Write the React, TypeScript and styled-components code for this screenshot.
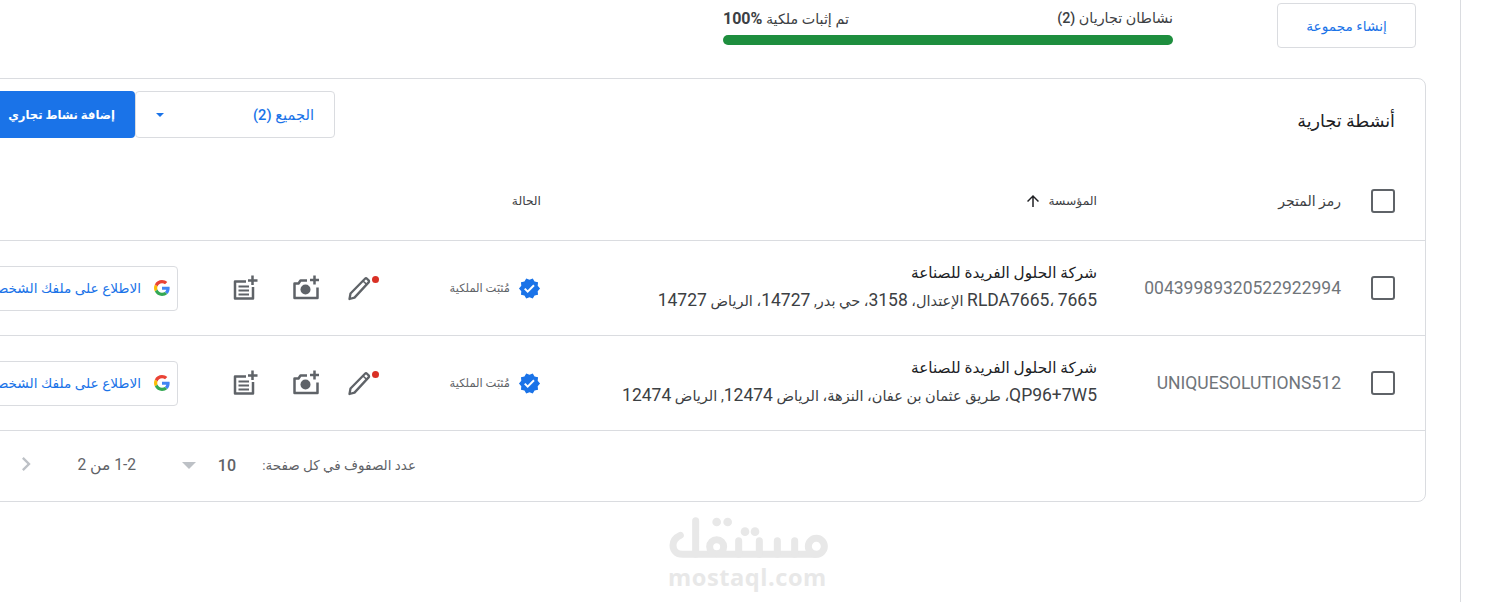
import React from "react";
import styled, { createGlobalStyle } from "styled-components";
import { MdVerified, MdArrowUpward, MdChevronRight } from "react-icons/md";

const Global = createGlobalStyle`
  html, body { margin: 0; padding: 0; height: 100%; overflow: hidden; background: #fff; }
  #root { width: 1496px; height: 602px; overflow: hidden; }
`;

const Page = styled.div`
  direction: rtl;
  position: relative;
  display: flex;
  width: 1496px;
  height: 602px;
  overflow: hidden;
  font-family: Roboto, "Liberation Sans", "DejaVu Sans", sans-serif;
  color: #3c4043;
  background: #fff;
`;
const Rail = styled.aside`
  flex: 0 0 36px;
  box-sizing: border-box;
  border-left: 1px solid #dadce0;
`;
const Main = styled.main`
  flex: 0 0 1600px;
  box-sizing: border-box;
  padding: 3px 34px 0 0;
`;
const TopBar = styled.div`
  display: flex;
  align-items: flex-start;
  gap: 104px;
  padding-right: 10px;
  margin-bottom: 30px;
`;
const GroupButton = styled.button`
  width: 139px;
  height: 45px;
  background: #fff;
  border: 1px solid #dadce0;
  border-radius: 4px;
  color: #1a73e8;
  font: inherit;
  font-size: 13.7px;
  font-weight: 500;
`;
const Progress = styled.div`
  width: 450px;
  padding-top: 4px;
`;
const ProgressLabels = styled.div`
  display: flex;
  justify-content: space-between;
  align-items: center;
  height: 22px;
  margin-bottom: 6px;
  font-size: 14.3px;
  font-weight: 500;
  color: #3c4043;
`;
const Percent = styled.span`
  direction: ltr;
  unicode-bidi: isolate;
  font-size: 16px;
  font-weight: 700;
`;
const Bar = styled.div`
  height: 10px;
  border-radius: 5px;
  background: #1e8e3e;
`;
const Card = styled.section`
  box-sizing: border-box;
  width: 1600px;
  height: 424px;
  border: 1px solid #dadce0;
  border-radius: 8px;
`;
const CardHeader = styled.header`
  display: flex;
  align-items: flex-start;
  height: 83px;
  box-sizing: border-box;
  padding: 12px 30px 0 0;
`;
const Title = styled.h2`
  flex: 0 0 1060px;
  margin: 0;
  padding-top: 15px;
  font-size: 17.5px;
  line-height: 30px;
  font-weight: 400;
  color: #202124;
`;
const Select = styled.div`
  box-sizing: border-box;
  flex: 0 0 200px;
  height: 47px;
  display: flex;
  align-items: center;
  justify-content: space-between;
  padding: 0 20px;
  border: 1px solid #dadce0;
  border-radius: 4px;
  color: #1a73e8;
  font-size: 14.7px;
  font-weight: 500;
`;
const Caret = styled.span<{ $c: string; $w: number }>`
  width: 0;
  height: 0;
  flex: none;
  border-left: ${(p) => p.$w}px solid transparent;
  border-right: ${(p) => p.$w}px solid transparent;
  border-top: ${(p) => p.$w}px solid ${(p) => p.$c};
`;
const AddButton = styled.button`
  box-sizing: border-box;
  flex: 0 0 170px;
  height: 47px;
  padding: 0 20px;
  text-align: right;
  background: #1a73e8;
  border: 0;
  border-radius: 4px;
  color: #fff;
  font: inherit;
  font-size: 11.6px;
  font-weight: 700;
  white-space: nowrap;
`;
const Row = styled.div<{ $h: number }>`
  display: grid;
  grid-template-columns: 84px 244px 556px 165px 198px 1fr;
  align-items: center;
  height: ${(p) => p.$h}px;
  box-sizing: content-box;
  border-bottom: 1px solid #dadce0;
`;
const CheckCell = styled.div`
  display: flex;
  padding-right: 30px;
`;
const CheckBox = styled.span`
  box-sizing: border-box;
  width: 24px;
  height: 24px;
  border: 2px solid #5f6368;
  border-radius: 3px;
`;
const HeadCell = styled.div<{ $large?: boolean }>`
  display: flex;
  align-items: center;
  gap: 7px;
  font-size: ${(p) => (p.$large ? "14px" : "12.3px")};
  font-weight: ${(p) => (p.$large ? 400 : 500)};
  color: #3c4043;
`;
const StoreCode = styled.div`
  font-size: 17.5px;
  color: #70757a;
  direction: ltr;
  text-align: right;
`;
const Business = styled.div`
  display: flex;
  flex-direction: column;
  gap: 5px;
  margin-top: -2px;
`;
const BusinessName = styled.div`
  font-size: 15.3px;
  line-height: 22px;
  color: #202124;
`;
const BusinessAddress = styled.div`
  font-size: 14.5px;
  line-height: 22px;
  color: #3c4043;
  white-space: nowrap;
`;
const LatinRun = styled.span`
  font-size: 17.5px;
`;
const Status = styled.div`
  display: flex;
  align-items: center;
  gap: 8px;
  font-size: 11.5px;
  color: #5f6368;
  svg { color: #1a73e8; flex: none; }
`;
const Actions = styled.div`
  display: flex;
  align-items: center;
  gap: 28px;
  padding-right: 4px;
`;
const IconSlot = styled.span<{ $w: number }>`
  position: relative;
  display: flex;
  flex: none;
  width: ${(p) => p.$w}px;
  height: 28px;
  align-items: center;
  justify-content: flex-start;
`;
const RedDot = styled.span`
  position: absolute;
  top: 2px;
  right: -7px;
  width: 7px;
  height: 7px;
  border-radius: 50%;
  background: #d93025;
`;
const ProfileButton = styled.button`
  box-sizing: border-box;
  width: 260px;
  height: 45px;
  display: flex;
  align-items: center;
  gap: 13px;
  padding: 0 7px;
  background: #fff;
  border: 1px solid #dadce0;
  border-radius: 4px;
  color: #1a73e8;
  font: inherit;
  font-size: 13.7px;
  font-weight: 500;
  white-space: nowrap;
`;
const Footer = styled.footer`
  display: flex;
  align-items: center;
  height: 68px;
  padding-right: 1009px;
  color: #5f6368;
  white-space: nowrap;
`;
const PerPage = styled.span`
  font-size: 13.5px;
  width: 180px;
`;
const PageSize = styled.span`
  font-size: 16px;
  font-weight: 500;
  width: 40px;
`;
const Range = styled.span`
  margin-right: 46px;
  margin-left: 36px;
  width: 60px;
  font-size: 15.6px;
`;
const Chevron = styled.span`
  display: flex;
  color: #bdc1c6;
  margin-top: -2px;
`;
const Watermark = styled.div`
  position: absolute;
  left: 640px;
  top: 500px;
  width: 220px;
  height: 102px;
  direction: ltr;
  pointer-events: none;
`;
const WatermarkLogo = styled.svg`
  display: block;
  position: absolute;
  left: 0;
  top: 0;
`;
const WatermarkText = styled.div`
  position: absolute;
  left: 28px;
  top: 63px;
  font-family: "Open Sans", Roboto, sans-serif;
  font-size: 23.6px;
  line-height: 28px;
  font-weight: 700;
  letter-spacing: 0.55px;
  color: #e8e8e8;
`;

const Pencil = () => (
  <svg width="24" height="28" viewBox="0 0 24 28" fill="none" stroke="#5f6368" strokeWidth="2.3" strokeLinejoin="round">
    <path d="M1.5 25l1-5.5L17 4.8c.6-.6 1.4-.6 2 0l1.6 1.6c.6.6.6 1.4 0 2L6.5 23.6z" />
    <path d="M15 7l4 3.6" strokeWidth="1.6" />
  </svg>
);
const CameraPlus = () => (
  <svg width="28" height="28" viewBox="0 0 28 28" fill="none" stroke="#5f6368" strokeWidth="2.5" strokeLinejoin="round">
    <path d="M15 6.5H8.5L6.5 9.5H2.5V24H25.5V13.5" />
    <path d="M22.5 1.5V10.5M18 6H27" />
    <circle cx="13.5" cy="15.5" r="5" fill="#5f6368" stroke="none" />
  </svg>
);
const NotePlus = () => (
  <svg width="28" height="28" viewBox="0 0 28 28" fill="none" stroke="#5f6368" strokeWidth="2.5" strokeLinejoin="round">
    <path d="M14 7.5H3V24.5H21V13" />
    <path d="M6.5 12.5H17M6.5 16.5H17M6.5 20.5H17" strokeWidth="2" />
    <path d="M20.5 1.5V11M16 6.5H25.5" />
  </svg>
);
const GoogleG = () => (
  <svg width="16" height="16" viewBox="0 0 48 48" style={{ flex: "none" }}>
    <path fill="#EA4335" d="M24 9.5c3.5 0 6.7 1.2 9.1 3.6l6.8-6.8C35.9 2.4 30.5 0 24 0 14.6 0 6.5 5.4 2.6 13.2l7.9 6.1C12.4 13.7 17.7 9.5 24 9.5z" />
    <path fill="#4285F4" d="M46.9 24.5c0-1.6-.1-3.1-.4-4.5H24v9h12.9c-.6 3-2.2 5.5-4.7 7.2l7.7 6c4.5-4.2 7-10.3 7-17.7z" />
    <path fill="#FBBC05" d="M10.5 28.7c-.5-1.4-.8-3-.8-4.7s.3-3.2.8-4.7l-7.9-6.1C.9 16.5 0 20.1 0 24s.9 7.5 2.6 10.8l7.9-6.1z" />
    <path fill="#34A853" d="M24 48c6.5 0 11.9-2.1 15.9-5.8l-7.7-6c-2.1 1.4-4.9 2.3-8.2 2.3-6.3 0-11.6-4.2-13.5-9.9l-7.9 6.1C6.5 42.6 14.6 48 24 48z" />
  </svg>
);

const rows = [
  { code: "00439989320522922994", addr: "7665 ،RLDA7665 الإعتدال، 3158، حي بدر, 14727، الرياض 14727" },
  { code: "UNIQUESOLUTIONS512", addr: "QP96+7W5، طريق عثمان بن عفان، النزهة، الرياض 12474, الرياض 12474" },
];

const Address = ({ text }: { text: string }) => (
  <BusinessAddress>
    {text.split(/([A-Z0-9+]+)/).map((part, i) =>
      i % 2 ? <LatinRun key={i}>{part}</LatinRun> : part
    )}
  </BusinessAddress>
);

export default function App() {
  return (
    <Page>
      <Global />
      <Rail />
      <Main>
        <TopBar>
          <GroupButton>إنشاء مجموعة</GroupButton>
          <Progress>
            <ProgressLabels>
              <span>نشاطان تجاريان (2)</span>
              <span>تم إثبات ملكية <Percent>100%</Percent></span>
            </ProgressLabels>
            <Bar />
          </Progress>
        </TopBar>
        <Card>
          <CardHeader>
            <Title>أنشطة تجارية</Title>
            <Select>
              <span>الجميع (2)</span>
              <Caret $c="#1a73e8" $w={4} />
            </Select>
            <AddButton>إضافة نشاط تجاري</AddButton>
          </CardHeader>
          <Row $h={78}>
            <CheckCell><CheckBox /></CheckCell>
            <HeadCell $large>رمز المتجر</HeadCell>
            <HeadCell>المؤسسة <MdArrowUpward size={18} color="#202124" /></HeadCell>
            <HeadCell>الحالة</HeadCell>
          </Row>
          {rows.map((r) => (
            <Row $h={94} key={r.code}>
              <CheckCell><CheckBox /></CheckCell>
              <StoreCode>{r.code}</StoreCode>
              <Business>
                <BusinessName>شركة الحلول الفريدة للصناعة</BusinessName>
                <Address text={r.addr} />
              </Business>
              <Status>
                <MdVerified size={23} />
                <span>مُثبَت الملكية</span>
              </Status>
              <Actions>
                <IconSlot $w={24}><Pencil /><RedDot /></IconSlot>
                <IconSlot $w={32}><CameraPlus /></IconSlot>
                <IconSlot $w={28}><NotePlus /></IconSlot>
              </Actions>
              <ProfileButton><GoogleG />الاطلاع على ملفك الشخصي</ProfileButton>
            </Row>
          ))}
          <Footer>
            <PerPage>عدد الصفوف في كل صفحة:</PerPage>
            <PageSize>10</PageSize>
            <Caret $c="#bdc1c6" $w={7} />
            <Range>1-2 من 2</Range>
            <Chevron><MdChevronRight size={28} /></Chevron>
          </Footer>
        </Card>
      </Main>
      <Watermark>
        <WatermarkLogo width="220" height="102" viewBox="0 0 660 306" fill="none" stroke="#e8e8e8" strokeWidth="21" strokeLinecap="round" strokeLinejoin="round">
          <path d="M167 62 V163 H128 C108 163 99 150 99 136 C99 122 108 112 121 106" />
          <path d="M167 163 H526" />
          <circle cx="230" cy="140" r="21" />
          <circle cx="529" cy="139" r="24" />
          <path d="M296 163 V122 M358 163 V122 M412 163 V122 M464 163 V122" />
          <g fill="#e8e8e8" stroke="none">
            <circle cx="230" cy="66" r="13" />
            <circle cx="263" cy="66" r="13" />
            <circle cx="315" cy="95" r="13" />
            <circle cx="345" cy="95" r="13" />
          </g>
        </WatermarkLogo>
        <WatermarkText>mostaql.com</WatermarkText>
      </Watermark>
    </Page>
  );
}
